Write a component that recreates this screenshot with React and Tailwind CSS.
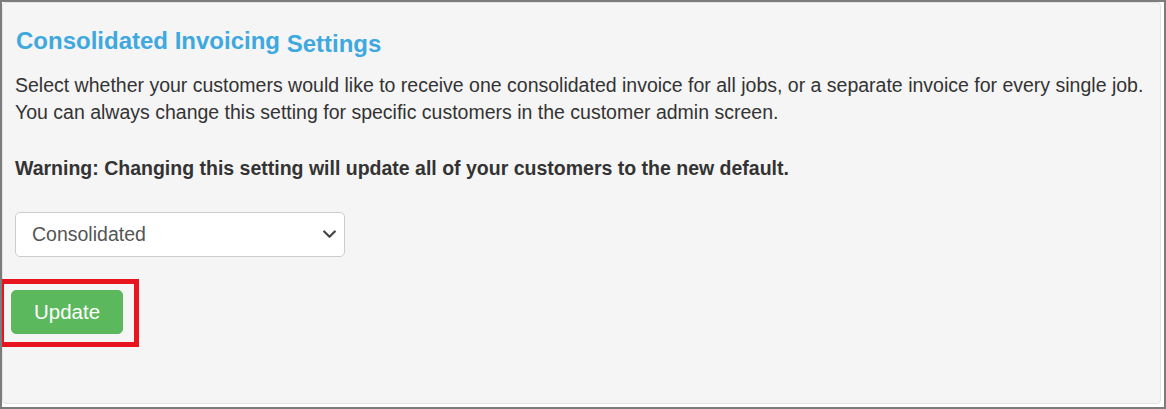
import React from 'react';

const App = () => {
  return (
    <div className="w-[1166px] h-[409px] overflow-hidden border-2 border-[#7c7c7c] bg-white font-['Liberation_Sans',Arial,sans-serif]">
      <div className="h-[402px] mr-[3px] border border-[#e3e3e3] rounded-[4px] bg-[#f5f5f5] pl-[12px] pr-[13px] pt-[25px]">
        {/* Title */}
        <h3 className="h-[26px] leading-[26px] text-[24px] font-bold text-[#3ea8df] pl-[1px]">
          Consolidated Invoicing <span className="align-[-3px]">Settings</span>
        </h3>

        {/* Description */}
        <p className="mt-[18px] text-[19.5px] leading-[27px] text-[#333333]">
          Select whether your customers would like to receive one consolidated invoice for all jobs, or a separate invoice for every single job.
          <br />
          You can always change this setting for specific customers in the customer admin screen.
        </p>

        <p className="mt-[29px] text-[19.5px] leading-[27px] font-bold text-[#333333]">
          Warning: Changing this setting will update all of your customers to the new default.
        </p>

        {/* Select */}
        <div className="relative mt-[30px] w-[330px]">
          <select
            defaultValue="consolidated"
            className="appearance-none w-full h-[45px] pl-[16px] pr-[40px] text-[19.5px] text-[#555555] bg-white border border-[#cccccc] rounded-[5px] outline-none"
          >
            <option value="consolidated">Consolidated</option>
            <option value="separate">Separate</option>
          </select>
          <svg className="pointer-events-none absolute right-[9px] top-[18px] w-[13px] h-[9px]" viewBox="0 0 13 9" fill="none">
            <path d="M1.2 1.5L6.5 6.8L11.8 1.5" stroke="#444444" strokeWidth="2.2" strokeLinecap="round" strokeLinejoin="round" />
          </svg>
        </div>

        {/* Update button with highlight annotation */}
        <div className="relative mt-[33px] -ml-[4px] w-[112px]">
          <button className="w-[112px] h-[44px] rounded-[5px] bg-[#5cb85c] border border-[#5cb85c] text-white text-[20.5px] leading-none">
            Update
          </button>
          <div className="pointer-events-none absolute -left-[12px] -top-[11px] -right-[16px] -bottom-[13px] border-[5px] border-[#e8141f]" />
        </div>
      </div>
    </div>
  );
};

export default App;
